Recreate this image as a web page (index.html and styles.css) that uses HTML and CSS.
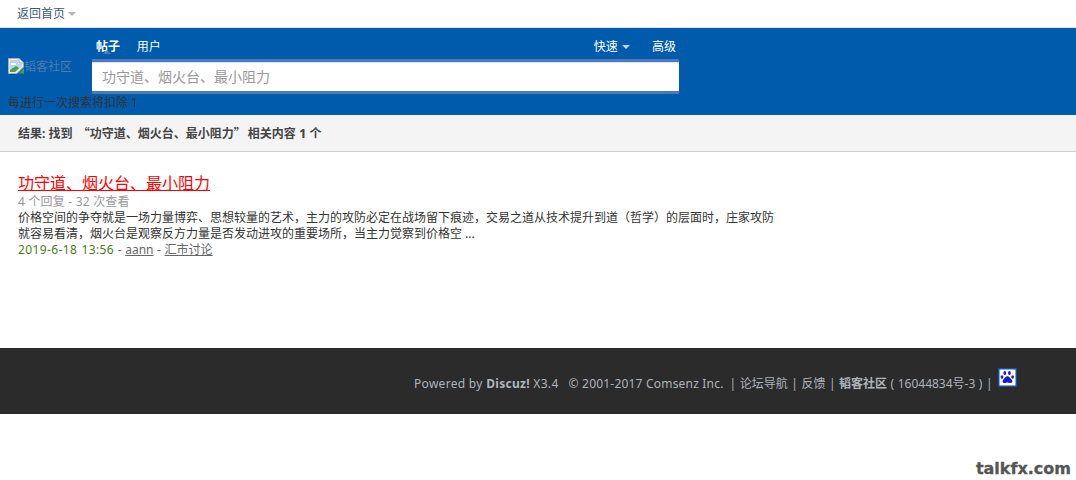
FILE: index.html
```html
<!DOCTYPE html>
<html lang="zh-CN">
<head>
  <meta charset="UTF-8">
  <title>搜索 - 韬客社区</title>
  <link rel="stylesheet" href="styles.css">
</head>
<body>
  <div class="topbar">
    <a class="backlink" href="#">返回首页</a><span class="caret caret-gray"></span>
  </div>
  <div class="header">
    <div class="logo-col">
      <div class="logo">
        <svg class="broken" width="16" height="16" viewBox="0 0 16 16">
          <path d="M0.5 0.5H11L15.5 5V9L9 15.5H0.5Z" fill="#e9eef2" stroke="#a7b0b6"/>
          <path d="M2 2H10V6H14V8L8 14H2Z" fill="#b9d3f0"/>
          <path d="M3 5H8V7H3Z" fill="#fff"/>
          <path d="M2 14V12L8 8L11 10L7 14Z" fill="#4fa13c"/>
          <path d="M11 0.5V5H15.5" fill="#fff" stroke="#a7b0b6"/>
          <path d="M16 10L11 15.5H16Z" fill="#4fa13c"/>
        </svg><span class="logo-alt">韬客社区</span>
      </div>
      <div class="credit-note">每进行一次搜索将扣除 1</div>
    </div>
    <div class="search-col">
      <div class="tabs">
        <div class="tabs-left">
          <a class="tab tab-on" href="#">帖子</a>
          <a class="tab" href="#">用户</a>
        </div>
        <div class="tabs-right">
          <a class="tab" href="#">快速<span class="caret caret-light"></span></a>
          <a class="tab" href="#">高级</a>
        </div>
      </div>
      <div class="search-box">
        <input class="search-input" type="text" value="功守道、烟火台、最小阻力">
      </div>
    </div>
  </div>
  <div class="result-bar">结果: 找到 <span class="kw">“功守道、烟火台、最小阻力”</span> 相关内容 <span class="count">1</span> 个</div>
  <div class="results">
    <h3 class="res-title"><a href="#">功守道、烟火台、最小阻力</a></h3>
    <p class="res-stat">4 个回复 - 32 次查看</p>
    <p class="res-text">价格空间的争夺就是一场力量博弈、思想较量的艺术，主力的攻防必定在战场留下痕迹，交易之道从技术提升到道（哲学）的层面时，庄家攻防就容易看清，烟火台是观察反方力量是否发动进攻的重要场所，当主力觉察到价格空 ...</p>
    <p class="res-meta"><span class="res-date">2019-6-18 13:56</span> - <a href="#">aann</a> - <a href="#">汇市讨论</a></p>
  </div>
  <div class="footer">
    <div class="footer-line">
      <span class="powered">Powered by <b>Discuz!</b> X3.4</span>
      <span class="copy">© 2001-2017 Comsenz Inc.</span>
      <span class="links">| 论坛导航 | 反馈 | <b>韬客社区</b> ( 16044834号-3 ) |</span>
      <svg class="paw" width="19" height="19" viewBox="0 0 19 19">
        <rect x="0.75" y="0.75" width="17.5" height="17.5" fill="#fff" stroke="#0b4fb3" stroke-width="1.5"/>
        <g fill="#1a1ad6">
          <ellipse cx="6.8" cy="5" rx="1.4" ry="1.9"/>
          <ellipse cx="11.4" cy="5" rx="1.4" ry="1.9"/>
          <ellipse cx="4" cy="9" rx="1.4" ry="1.8"/>
          <ellipse cx="14.6" cy="9" rx="1.4" ry="1.8"/>
          <path d="M9.4 8.2C7.6 8.2 7 10 5.6 11.2C4 12.6 4.4 15.2 6.8 15C8 14.9 8.6 14.5 9.4 14.5C10.2 14.5 11 14.9 12.2 15C14.6 15.2 15 12.6 13.3 11.2C11.8 10 11.2 8.2 9.4 8.2Z"/>
        </g>
      </svg>
    </div>
  </div>
  <div class="watermark">talkfx.com</div>
</body>
</html>
```

FILE: styles.css
```css
body {
  margin: 0;
  padding: 0;
  background-color: #fff;
  color: #333;
  font-family: "Noto Sans", "Noto Sans CJK SC", sans-serif;
  font-size: 12px;
}
a {
  color: inherit;
}
p {
  margin: 0;
}
.topbar {
  height: 27px;
  padding-left: 17px;
  line-height: 28px;
  border-bottom: 1px solid #e4e4e4;
}
.backlink {
  color: #3b5a78;
  text-decoration: none;
}
.caret {
  display: inline-block;
  width: 0;
  height: 0;
  margin-left: 3px;
  border-style: solid;
  border-width: 4px 4px 0;
  vertical-align: 2px;
}
.caret-gray {
  border-color: #b5b5b5 transparent transparent;
}
.caret-light {
  border-color: #c9d3de transparent transparent;
  margin-left: 4px;
}
.header {
  display: flex;
  height: 87px;
  background-color: #005bac;
}
.logo-col {
  width: 84px;
  padding-left: 8px;
  flex-shrink: 0;
}
.logo {
  display: flex;
  align-items: center;
  height: 16px;
  margin-top: 30px;
  line-height: 18px;
  white-space: nowrap;
}
.logo-alt {
  padding-top: 1px;
  color: #4d7dad;
  font-size: 12px;
}
.credit-note {
  margin-top: 21px;
  color: #333;
  font-size: 12px;
  line-height: 16px;
  white-space: nowrap;
}
.search-col {
  width: 587px;
}
.tabs {
  display: flex;
  justify-content: space-between;
  height: 31px;
  line-height: 37px;
}
.tab {
  color: #fff;
  text-decoration: none;
  margin: 0 3px;
  padding: 0 1px;
}
.tab + .tab {
  margin-left: 8.5px;
}
.tabs-right .tab {
  margin-right: 2px;
}
.tabs-right .tab + .tab {
  margin-left: 15px;
}
.tab-on {
  font-weight: bold;
  position: relative;
}
.tab-on::after {
  content: "";
  position: absolute;
  left: 8px;
  top: 12px;
  border-style: solid;
  border-width: 0 4px 4px;
  border-color: transparent transparent #4a7bbd;
}
.search-box {
  background-color: #fff;
  border-top: 3px solid #4a7bbd;
  border-bottom: 3px solid #4a7bbd;
  box-shadow: inset 0 1px 1px #ddd;
}
.search-input {
  display: block;
  box-sizing: border-box;
  width: 100%;
  height: 29px;
  padding: 0 10px 2px;
  border: 0;
  color: #999;
  background: transparent;
  font-family: "Noto Sans CJK SC", sans-serif;
  font-size: 14px;
}
.result-bar {
  height: 36px;
  padding-left: 18px;
  line-height: 36px;
  background-color: #f4f4f4;
  border-bottom: 1px solid #ccc;
  font-weight: bold;
  color: #444;
}
.kw {
  font-family: "Noto Sans CJK SC", sans-serif;
  margin: 0 -1px 0 2px;
}
.count {
  font-size: 13px;
}
.results {
  height: 196px;
  padding: 21px 0 0 18px;
  box-sizing: border-box;
}
.res-title {
  margin: 0;
  font-size: 16px;
  font-weight: normal;
  line-height: 21px;
}
.res-title a {
  color: #f00;
}
.res-stat {
  color: #999;
  line-height: 16px;
  letter-spacing: 0.2px;
}
.res-text {
  width: 760px;
  line-height: 16px;
  color: #333;
}
.res-meta {
  color: #666;
  line-height: 16px;
  word-spacing: 0.5px;
}
.res-date {
  color: #4a7c1f;
  letter-spacing: 0.4px;
}
.footer {
  height: 66px;
  background-color: #2b2b2b;
  color: #aeb4ba;
}
.footer-line {
  display: flex;
  align-items: flex-start;
  padding: 20px 0 0 414px;
  height: 46px;
  line-height: 32px;
  white-space: pre;
}
.powered {
  letter-spacing: 0.3px;
}
.copy {
  margin-left: 10px;
  letter-spacing: 0.2px;
}
.links {
  margin-left: 6px;
  word-spacing: 0.4px;
}
.paw {
  margin-left: 5px;
}
.watermark {
  padding: 47px 5px 0 0;
  text-align: right;
  color: #555;
  font-family: "DejaVu Sans", sans-serif;
  font-size: 16px;
  font-weight: bold;
  line-height: 16px;
  -webkit-text-stroke: 0.3px #555;
}
```
